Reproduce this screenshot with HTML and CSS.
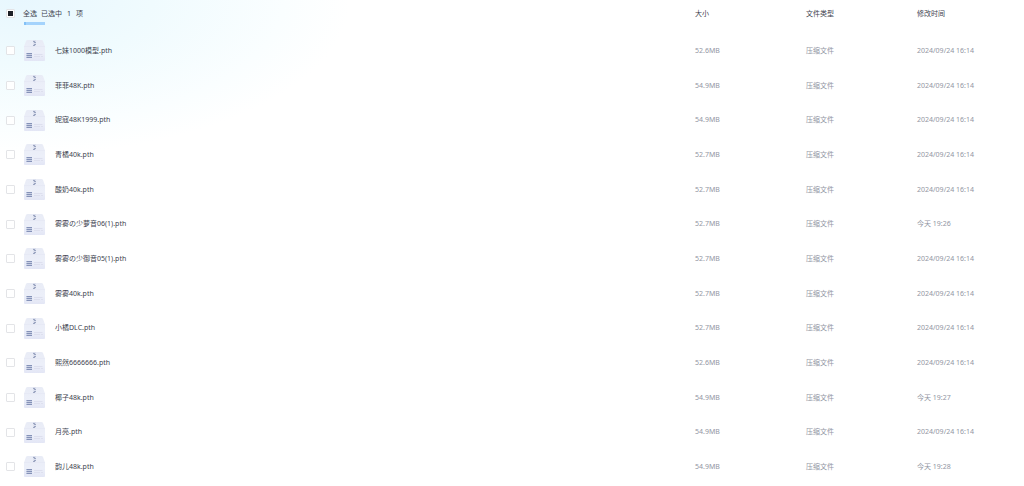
FILE: index.html
```html
<!DOCTYPE html>
<html lang="zh-CN">
<head>
<meta charset="utf-8">
<title>文件列表</title>
<link rel="stylesheet" href="styles.css">
</head>
<body>
<svg class="sprite" aria-hidden="true">
  <defs>
    <linearGradient id="boxFill" x1="0" y1="0" x2="0" y2="1">
      <stop offset="0" stop-color="#e9ecf6"/>
      <stop offset="0.6" stop-color="#eceff9"/>
      <stop offset="1" stop-color="#e3e6f5"/>
    </linearGradient>
  </defs>
  <symbol id="archive" viewBox="0 0 42 42">
    <path d="M4 2Q5 0 7 0H35Q37 0 38 2L42 13V40Q42 42 40 42H2Q0 42 0 40V13Z" fill="url(#boxFill)"/>
    <path d="M0 13H42" stroke="#e2e5f2" stroke-width="1"/>
    <path d="M18 0H24V10Q24 12 21 12Q18 12 18 10Z" fill="#dce0ee"/>
    <path d="M18 2H22V4H24V6H22V8H24V10H22V12H18V10H20V8H22V6H20V4H18Z" fill="#9ca6c2"/>
    <path d="M5 26H16V36H5Z" fill="#c9d0e4"/>
    <path d="M5 27H16M5 31H16M5 35H16" stroke="#8592b8" stroke-width="2"/>
    <path d="M20 28H37V30H20ZM20 32H32V34H20ZM34 32H38V34H34Z" fill="#dddfee"/>
  </symbol>
</svg>
<table class="files">
  <colgroup><col class="col-check"><col class="col-icon"><col class="col-name"><col class="col-meta"><col class="col-meta"><col class="col-meta"></colgroup>
  <thead>
    <tr>
      <th><input class="check" type="checkbox" id="all" checked></th>
      <th colspan="2"><div class="summary"><label class="select-all" for="all">全选</label><span>已选中</span><span class="count">1</span><span>项</span></div></th>
      <th>大小</th><th>文件类型</th><th>修改时间</th>
    </tr>
  </thead>
  <tbody>
    <tr><td><input class="check" type="checkbox" id="f1"></td><td><svg class="icon"><use href="#archive"/></svg></td><td><label class="name" for="f1">七妹1000模型.pth</label></td><td>52.6MB</td><td>压缩文件</td><td>2024/09/24 16:14</td></tr>
    <tr><td><input class="check" type="checkbox" id="f2"></td><td><svg class="icon"><use href="#archive"/></svg></td><td><label class="name" for="f2">菲菲48K.pth</label></td><td>54.9MB</td><td>压缩文件</td><td>2024/09/24 16:14</td></tr>
    <tr><td><input class="check" type="checkbox" id="f3"></td><td><svg class="icon"><use href="#archive"/></svg></td><td><label class="name" for="f3">妮寇48K1999.pth</label></td><td>54.9MB</td><td>压缩文件</td><td>2024/09/24 16:14</td></tr>
    <tr><td><input class="check" type="checkbox" id="f4"></td><td><svg class="icon"><use href="#archive"/></svg></td><td><label class="name" for="f4">青橘40k.pth</label></td><td>52.7MB</td><td>压缩文件</td><td>2024/09/24 16:14</td></tr>
    <tr><td><input class="check" type="checkbox" id="f5"></td><td><svg class="icon"><use href="#archive"/></svg></td><td><label class="name" for="f5">酸奶40k.pth</label></td><td>52.7MB</td><td>压缩文件</td><td>2024/09/24 16:14</td></tr>
    <tr><td><input class="check" type="checkbox" id="f6"></td><td><svg class="icon"><use href="#archive"/></svg></td><td><label class="name" for="f6">雾雾の少萝音06(1).pth</label></td><td>52.7MB</td><td>压缩文件</td><td>今天 19:26</td></tr>
    <tr><td><input class="check" type="checkbox" id="f7"></td><td><svg class="icon"><use href="#archive"/></svg></td><td><label class="name" for="f7">雾雾の少御音05(1).pth</label></td><td>52.7MB</td><td>压缩文件</td><td>2024/09/24 16:14</td></tr>
    <tr><td><input class="check" type="checkbox" id="f8"></td><td><svg class="icon"><use href="#archive"/></svg></td><td><label class="name" for="f8">雾雾40k.pth</label></td><td>52.7MB</td><td>压缩文件</td><td>2024/09/24 16:14</td></tr>
    <tr><td><input class="check" type="checkbox" id="f9"></td><td><svg class="icon"><use href="#archive"/></svg></td><td><label class="name" for="f9">小橘DLC.pth</label></td><td>52.7MB</td><td>压缩文件</td><td>2024/09/24 16:14</td></tr>
    <tr><td><input class="check" type="checkbox" id="f10"></td><td><svg class="icon"><use href="#archive"/></svg></td><td><label class="name" for="f10">熙然6666666.pth</label></td><td>52.6MB</td><td>压缩文件</td><td>2024/09/24 16:14</td></tr>
    <tr><td><input class="check" type="checkbox" id="f11"></td><td><svg class="icon"><use href="#archive"/></svg></td><td><label class="name" for="f11">椰子48k.pth</label></td><td>54.9MB</td><td>压缩文件</td><td>今天 19:27</td></tr>
    <tr><td><input class="check" type="checkbox" id="f12"></td><td><svg class="icon"><use href="#archive"/></svg></td><td><label class="name" for="f12">月亮.pth</label></td><td>54.9MB</td><td>压缩文件</td><td>2024/09/24 16:14</td></tr>
    <tr><td><input class="check" type="checkbox" id="f13"></td><td><svg class="icon"><use href="#archive"/></svg></td><td><label class="name" for="f13">韵儿48k.pth</label></td><td>54.9MB</td><td>压缩文件</td><td>今天 19:28</td></tr>
  </tbody>
</table>
</body>
</html>
```
FILE: styles.css
```css
* { box-sizing: border-box; }

body {
  margin: 0;
  background: radial-gradient(ellipse 330px 155px at 20px 0, #e8f7fe 0%, #f0fbfe 40%, #fafeff 80%, #fff 100%) no-repeat #fff;
  color: #40444f;
  font: 7px/10px "Noto Sans", "Noto Sans CJK SC", sans-serif;
}

.sprite { position: absolute; width: 0; height: 0; }

.files {
  width: 100%;
  table-layout: fixed;
  border-collapse: collapse;
}

.col-check { width: 23px; }
.col-icon { width: 32px; }
.col-meta { width: 111px; }
.col-meta:last-child { width: 107px; }

th, td {
  padding: 0;
  text-align: left;
  vertical-align: middle;
  font-weight: 400;
}

th { height: 33px; padding-bottom: 6px; }

td { height: 35px; color: #9296a3; }
tr:nth-child(3n) td { height: 34px; }

.summary { display: flex; gap: 4px; }
.count { padding: 0 1px; }

.select-all { position: relative; }
.select-all::after {
  content: "";
  position: absolute;
  left: 1px;
  top: 13px;
  width: 21px;
  height: 3px;
  background: linear-gradient(90deg, #83c1f6 10%, #a4d3fc 10%);
}

.name { color: #40444f; }

.icon { display: block; width: 21px; height: 21px; margin-left: 1px; }

.check {
  appearance: none;
  display: grid;
  place-items: center;
  width: 9px;
  height: 9px;
  margin: 0 0 0 6px;
  border: 1px solid #e3e4e7;
  border-radius: 1px;
  background: #fff;
}
.check:checked::before {
  content: "";
  width: 5px;
  height: 5px;
  background: #1d2027;
}
```
